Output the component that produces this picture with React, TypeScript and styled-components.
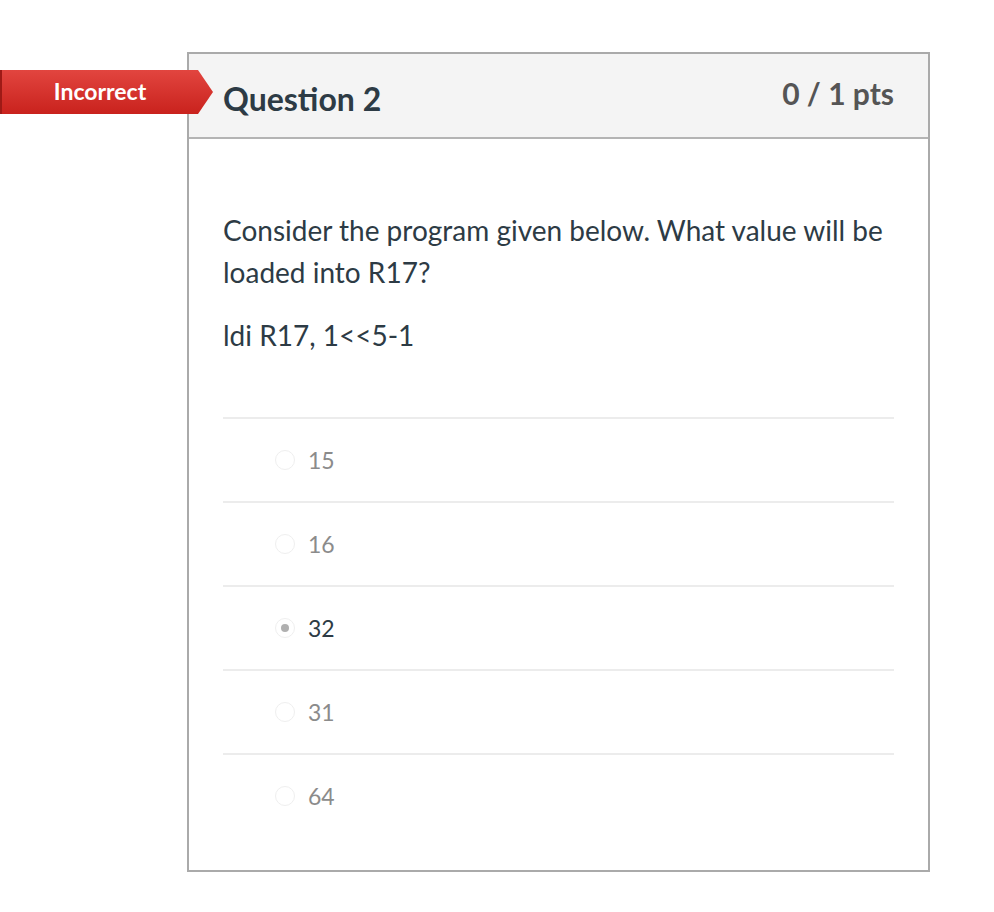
import React from 'react';
import styled, { createGlobalStyle } from 'styled-components';

const GlobalStyle = createGlobalStyle`
  body {
    margin: 0;
    background: #ffffff;
    font-family: Lato, "Noto Sans", sans-serif;
  }
`;

const answers = [
  { label: '15', selected: false },
  { label: '16', selected: false },
  { label: '32', selected: true },
  { label: '31', selected: false },
  { label: '64', selected: false },
];

export default function App() {
  return (
    <>
      <GlobalStyle />
      <StyledPage>
        <StyledCard>
          <StyledBadge>Incorrect</StyledBadge>
          <StyledHeader>
            <StyledTitle>Question 2</StyledTitle>
            <StyledPoints>0 / 1 pts</StyledPoints>
          </StyledHeader>
          <StyledBody>
            <StyledText>
              Consider the program given below. What value will be loaded into R17?
            </StyledText>
            <StyledText>ldi R17, 1&lt;&lt;5-1</StyledText>
            <StyledAnswers>
              {answers.map((a) => (
                <StyledAnswer key={a.label}>
                  <StyledRadio $checked={a.selected} />
                  <StyledLabel $selected={a.selected}>{a.label}</StyledLabel>
                </StyledAnswer>
              ))}
            </StyledAnswers>
          </StyledBody>
        </StyledCard>
      </StyledPage>
    </>
  );
}

const StyledPage = styled.div`
  padding: 52px 0 40px 187px;
`;

const StyledCard = styled.div`
  position: relative;
  width: 743px;
  box-sizing: border-box;
  border: 2px solid #aaaaaa;
  background: #ffffff;
`;

const StyledBadge = styled.div`
  position: absolute;
  left: -189px;
  top: 16px;
  width: 213px;
  height: 44px;
  box-sizing: border-box;
  padding: 0 15px 3px 0;
  display: flex;
  align-items: center;
  justify-content: center;
  background: linear-gradient(#e2453f, #c9221d);
  border-left: 2px solid #9e1a16;
  clip-path: polygon(0 0, 198px 0, 213px 50%, 198px 100%, 0 100%);
  color: #ffffff;
  font-size: 23px;
  font-weight: 700;
`;

const StyledHeader = styled.div`
  height: 83px;
  display: flex;
  justify-content: space-between;
  align-items: flex-start;
  padding: 0 34px;
  background: #f4f4f4;
  border-bottom: 2px solid #b4b4b4;
`;

const StyledTitle = styled.h2`
  margin: 26px 0 0;
  font-size: 32px;
  font-weight: 700;
  color: #2d3b45;
  line-height: 38px;
`;

const StyledPoints = styled.div`
  margin-top: 20px;
  font-size: 30px;
  font-weight: 700;
  color: #555555;
  line-height: 38px;
`;

const StyledBody = styled.div`
  padding: 70px 34px 33px;
`;

const StyledText = styled.p`
  margin: 0 0 21px;
  font-size: 28px;
  line-height: 42px;
  color: #2d3b45;
`;

const StyledAnswers = styled.div`
  margin-top: 61px;
`;

const StyledAnswer = styled.div`
  height: 82px;
  display: flex;
  align-items: center;
  padding-left: 52px;
  border-top: 2px solid #ececec;
`;

const StyledRadio = styled.span<{ $checked: boolean }>`
  width: 20px;
  height: 20px;
  box-sizing: border-box;
  border-radius: 50%;
  border: 1.5px solid #efefef;
  background: #ffffff;
  display: flex;
  align-items: center;
  justify-content: center;
  margin-right: 13px;

  &::after {
    content: '';
    display: ${(p) => (p.$checked ? 'block' : 'none')};
    width: 8px;
    height: 8px;
    border-radius: 50%;
    background: #b0b0b0;
  }
`;

const StyledLabel = styled.span<{ $selected: boolean }>`
  font-size: 23px;
  color: ${(p) => (p.$selected ? '#2d3b45' : '#8b8b8b')};
`;
